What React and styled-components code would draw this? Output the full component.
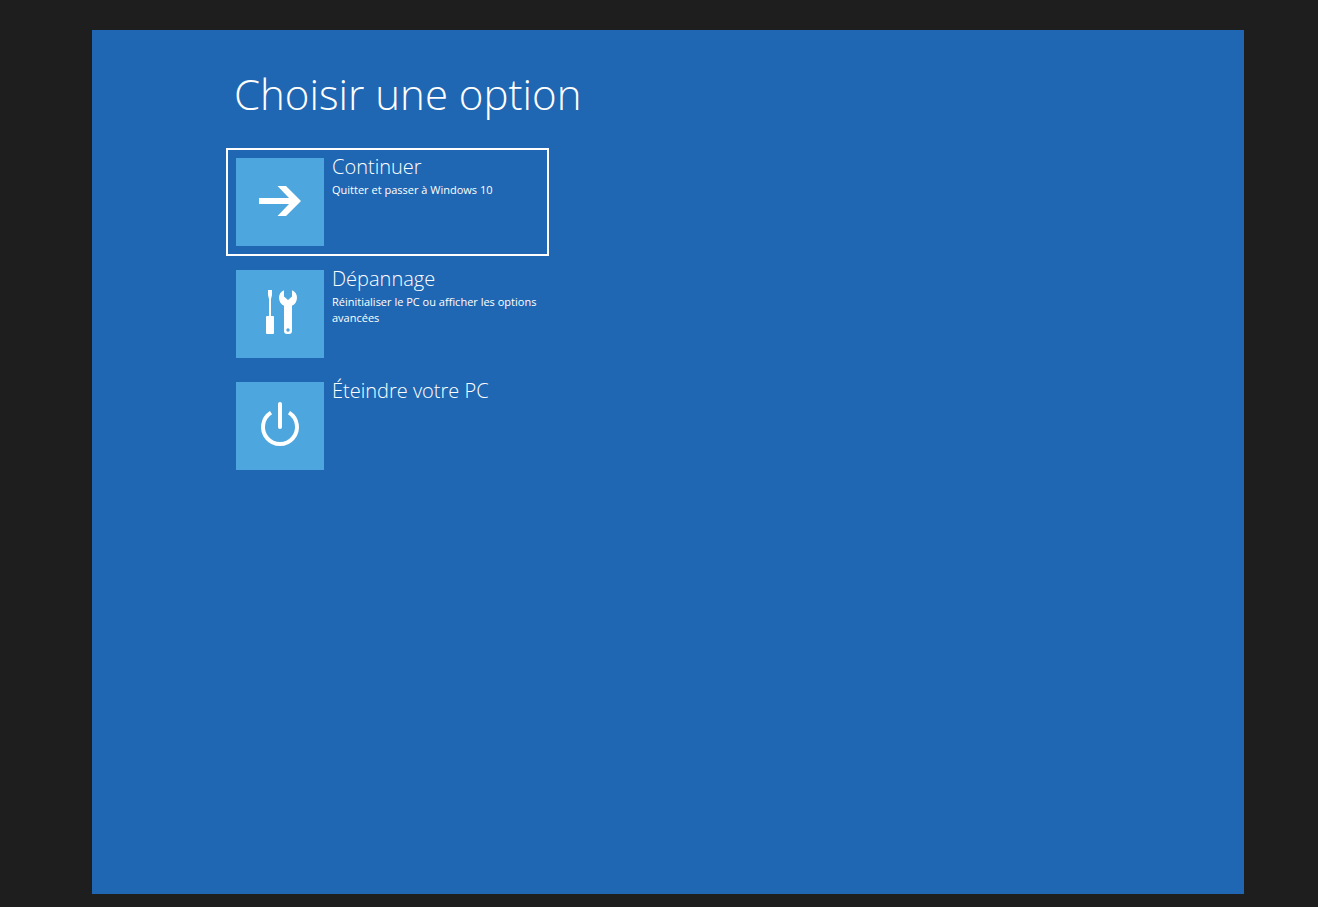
import React from "react";
import styled, { createGlobalStyle } from "styled-components";

const GlobalStyle = createGlobalStyle`
  * { box-sizing: border-box; }
  body {
    margin: 0;
    background: #1e1e1e;
    color: #fff;
    font-family: "Segoe UI", "Open Sans", "Noto Sans", sans-serif;
  }
`;

const Page = styled.div`
  display: flex;
  min-height: 100vh;
  padding: 30px 74px 13px 92px;
`;

const Screen = styled.main`
  flex: 1;
  padding: 34px 134px;
  background: #1f67b3;
`;

const Title = styled.h1`
  margin: 0 0 24px;
  padding-left: 8px;
  font-size: 42px;
  line-height: 60px;
  font-weight: 300;
`;

const OptionList = styled.div`
  display: flex;
  flex-direction: column;
  gap: 4px;
  max-width: 323px;
`;

const Option = styled.button`
  display: flex;
  align-items: flex-start;
  gap: 8px;
  padding: 8px;
  border: 2px solid ${(p) => (p.$selected ? "#fff" : "transparent")};
  background: none;
  color: inherit;
  font-family: inherit;
  text-align: left;
  cursor: pointer;
  outline: none;

  &:focus-visible { border-color: #fff; }
`;

const Tile = styled.svg`
  flex: none;
  width: 88px;
  height: 88px;
  background: #4da6dd;
`;

const OptionText = styled.span`
  display: flex;
  flex-direction: column;
  min-width: 0;
`;

const OptionName = styled.span`
  margin-top: -6px;
  font-size: 20px;
  line-height: 30px;
  font-weight: 300;
`;

const OptionDetail = styled.span`
  font-size: 11px;
  line-height: 16px;
`;

const ArrowIcon = () => (
  <Tile viewBox="0 0 88 88" fill="#fff" aria-hidden="true">
    <path d="M23 40H53L41.5 28H50L65 43L50 58H41.5L53 46H23Z" />
  </Tile>
);

const ToolsIcon = () => (
  <Tile viewBox="0 0 88 88" fill="#fff" aria-hidden="true">
    <path d="M32 20H36V25L35 29V46H37Q38 46 38 47V63Q38 64 37 64H31Q30 64 30 63V47Q30 46 31 46H33V29L32 25Z" />
    <path
      fillRule="evenodd"
      d="M48 20.3V26.5L52 30L56 26.5V20.3C59 21.5 61 24.3 61 27.5C61 31.5 59 34.5 56 35.7V61Q56 64 53 64H51Q48 64 48 61V35.7C45 34.5 43 31.5 43 27.5C43 24.3 45 21.5 48 20.3ZM52 58.3A1.7 1.7 0 1 0 52 61.7A1.7 1.7 0 1 0 52 58.3Z"
    />
  </Tile>
);

const PowerIcon = () => (
  <Tile viewBox="0 0 88 88" fill="none" stroke="#fff" strokeWidth="4" aria-hidden="true">
    <path d="M35 30.6A17 17 0 1 0 53 30.6" />
    <path d="M44 22V45" strokeLinecap="round" />
  </Tile>
);

const options = [
  { name: "Continuer", detail: "Quitter et passer à Windows 10", Icon: ArrowIcon },
  { name: "Dépannage", detail: "Réinitialiser le PC ou afficher les options avancées", Icon: ToolsIcon },
  { name: "Éteindre votre PC", Icon: PowerIcon },
];

export default function App() {
  return (
    <>
      <GlobalStyle />
      <Page>
        <Screen>
          <Title>Choisir une option</Title>
          <OptionList>
            {options.map(({ name, detail, Icon }, i) => (
              <Option key={name} type="button" $selected={i === 0}>
                <Icon />
                <OptionText>
                  <OptionName>{name}</OptionName>
                  {detail && <OptionDetail>{detail}</OptionDetail>}
                </OptionText>
              </Option>
            ))}
          </OptionList>
        </Screen>
      </Page>
    </>
  );
}
